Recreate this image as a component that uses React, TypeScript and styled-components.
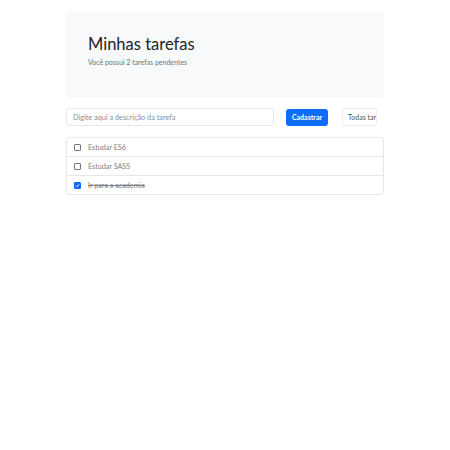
import React, { useState } from 'react'
import styled, { createGlobalStyle } from 'styled-components'

const GlobalStyle = createGlobalStyle`
  body {
    margin: 0;
    background: #fff;
    font-family: Lato, 'Liberation Sans', sans-serif;
    color: #212529;
  }
`

const Container = styled.main`
  width: 318px;
  margin: 12px auto 0;
`

const Jumbotron = styled.header`
  background: #f8f9fa;
  border-radius: 3px;
  height: 86px;
  box-sizing: border-box;
  padding: 22px 22px 0;

  h1 {
    margin: 0;
    font-size: 16.5px;
    font-weight: 400;
    line-height: 20px;
    color: #212529;
  }

  p {
    margin: 4px 0 0;
    font-size: 7px;
    line-height: 9px;
    color: #6c757d;
  }
`

const FormRow = styled.form`
  display: flex;
  align-items: center;
  margin-top: 10px;
  height: 18px;
`

const Input = styled.input`
  box-sizing: border-box;
  width: 208px;
  height: 18px;
  border: 1px solid #e3e6ea;
  border-radius: 3px;
  padding: 0 6px;
  font-family: inherit;
  font-size: 7.3px;
  outline: none;

  &::placeholder {
    color: #8a8f94;
  }
`

const Button = styled.button`
  box-sizing: border-box;
  margin-left: 12px;
  width: 42px;
  height: 17px;
  border: none;
  border-radius: 3px;
  background: #0d6efd;
  color: #fff;
  font-family: inherit;
  font-size: 7px;
  font-weight: 700;
  padding: 0;
`

const Select = styled.div`
  box-sizing: border-box;
  margin-left: 14px;
  width: 35px;
  height: 18px;
  border: 1px solid #eceef0;
  border-radius: 3px;
  padding: 0 0 0 5px;
  font-size: 7px;
  line-height: 16px;
  color: #555;
  white-space: nowrap;
  overflow: hidden;
`

const List = styled.ul`
  list-style: none;
  margin: 11px 0 0;
  padding: 0;
  border: 1px solid #e6e8eb;
  border-radius: 3px;
`

const Item = styled.li<{ $done: boolean }>`
  display: flex;
  align-items: center;
  height: 18px;
  padding-left: 7px;
  font-size: 7.2px;
  color: #7b8288;
  text-decoration: ${p => (p.$done ? 'line-through' : 'none')};

  & + & {
    border-top: 1px solid #e6e8eb;
  }
`

const Check = styled.span<{ $checked: boolean }>`
  box-sizing: border-box;
  width: 7px;
  height: 7px;
  margin-right: 7px;
  border: 1px solid ${p => (p.$checked ? '#0d6efd' : '#777')};
  border-radius: 1px;
  background: ${p => (p.$checked ? '#0d6efd' : '#fff')};
  display: flex;
  align-items: center;
  justify-content: center;
`

const tarefas = [
  { id: 1, descricao: 'Estudar ES6', concluida: false },
  { id: 2, descricao: 'Estudar SASS', concluida: false },
  { id: 3, descricao: 'Ir para a academia', concluida: true },
]

const App = () => {
  const [lista] = useState(tarefas)
  const pendentes = lista.filter(t => !t.concluida).length

  return (
    <>
      <GlobalStyle />
      <Container>
        <Jumbotron>
          <h1>Minhas tarefas</h1>
          <p>Você possui {pendentes} tarefas pendentes</p>
        </Jumbotron>

        <FormRow onSubmit={e => e.preventDefault()}>
          <Input placeholder='Digite aqui a descrição da tarefa' />
          <Button type='submit'>Cadastrar</Button>
          <Select>Todas tarefas</Select>
        </FormRow>

        <List>
          {lista.map(t => (
            <Item key={t.id} $done={t.concluida}>
              <Check $checked={t.concluida}>
                {t.concluida && (
                  <svg width='5' height='5' viewBox='0 0 10 10'>
                    <path d='M2 5.2l2 2 4-4.4' stroke='#fff' strokeWidth='1.8' fill='none' />
                  </svg>
                )}
              </Check>
              {t.descricao}
            </Item>
          ))}
        </List>
      </Container>
    </>
  )
}

export default App
